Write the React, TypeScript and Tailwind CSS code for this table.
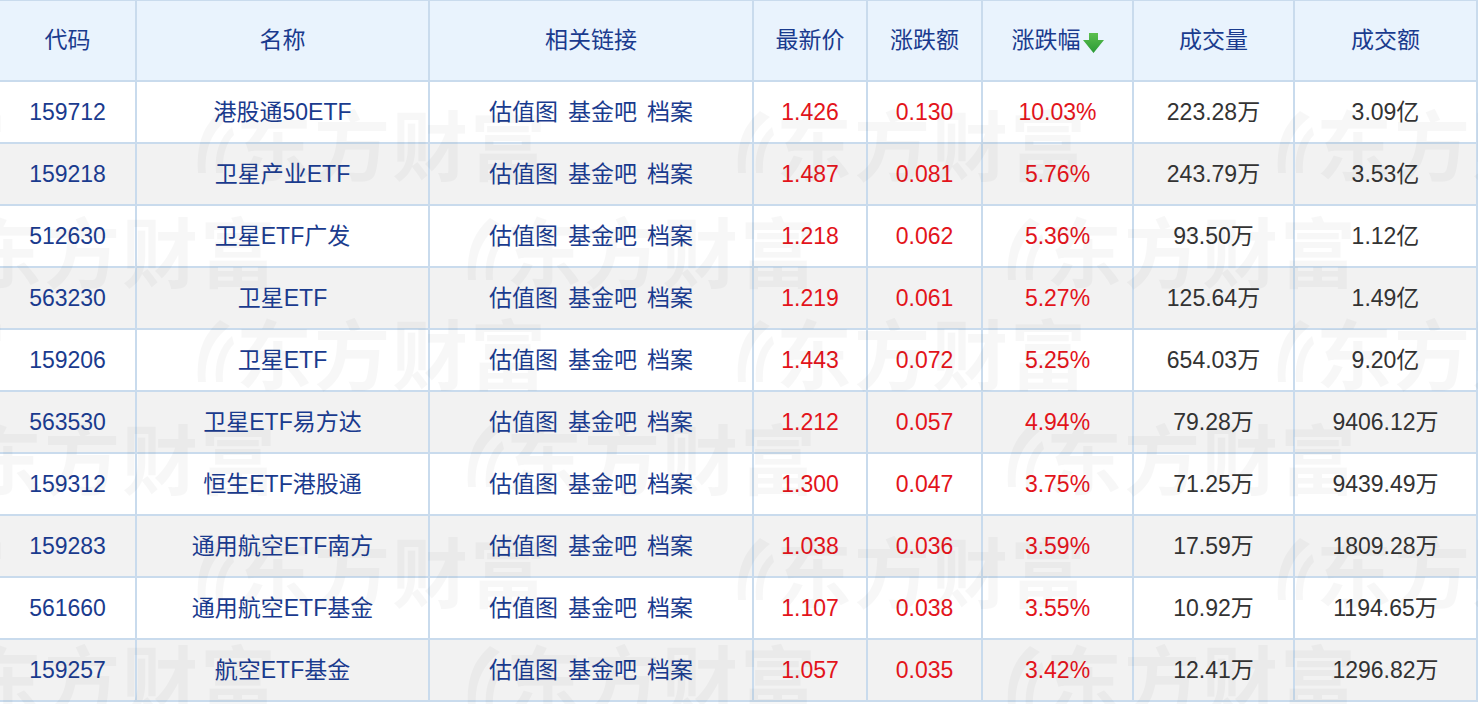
const rows = [
  { code: "159712", name: "港股通50ETF", price: "1.426", chg: "0.130", pct: "10.03%", vol: "223.28万", amt: "3.09亿" },
  { code: "159218", name: "卫星产业ETF", price: "1.487", chg: "0.081", pct: "5.76%", vol: "243.79万", amt: "3.53亿" },
  { code: "512630", name: "卫星ETF广发", price: "1.218", chg: "0.062", pct: "5.36%", vol: "93.50万", amt: "1.12亿" },
  { code: "563230", name: "卫星ETF", price: "1.219", chg: "0.061", pct: "5.27%", vol: "125.64万", amt: "1.49亿" },
  { code: "159206", name: "卫星ETF", price: "1.443", chg: "0.072", pct: "5.25%", vol: "654.03万", amt: "9.20亿" },
  { code: "563530", name: "卫星ETF易方达", price: "1.212", chg: "0.057", pct: "4.94%", vol: "79.28万", amt: "9406.12万" },
  { code: "159312", name: "恒生ETF港股通", price: "1.300", chg: "0.047", pct: "3.75%", vol: "71.25万", amt: "9439.49万" },
  { code: "159283", name: "通用航空ETF南方", price: "1.038", chg: "0.036", pct: "3.59%", vol: "17.59万", amt: "1809.28万" },
  { code: "561660", name: "通用航空ETF基金", price: "1.107", chg: "0.038", pct: "3.55%", vol: "10.92万", amt: "1194.65万" },
  { code: "159257", name: "航空ETF基金", price: "1.057", chg: "0.035", pct: "3.42%", vol: "12.41万", amt: "1296.82万" },
];

const headers = ["代码", "名称", "相关链接", "最新价", "涨跌额", "涨跌幅", "成交量", "成交额"];

// watermark tiles: [left, top]
const marks: [number, number][] = [];
const tops = [104, 211, 313, 418, 531, 639];
tops.forEach((t, i) => {
  const xs = i % 2 === 0 ? [-350, 190, 730, 1270] : [-80, 460, 1000, 1540];
  xs.forEach((x) => marks.push([x, t]));
});

function SortDown() {
  return (
    <svg width="21" height="22" viewBox="0 0 21 22" className="ml-[2px] mt-[4px]">
      <defs>
        <linearGradient id="g" x1="0" y1="0" x2="0" y2="1">
          <stop offset="0" stopColor="#5cbf4e" />
          <stop offset="1" stopColor="#2a9a36" />
        </linearGradient>
      </defs>
      <path d="M6 1h9v7h6l-10.5 13L0 8h6z" fill="url(#g)" />
    </svg>
  );
}

function Mark({ x, y }: { x: number; y: number }) {
  return (
    <div className="absolute flex items-center whitespace-nowrap" style={{ left: x, top: y }}>
      <svg width="44" height="70" viewBox="0 0 44 70" className="mr-[2px] shrink-0">
        <path d="M30 4 C14 18 6 36 8 66 L16 66 C14 42 22 24 40 10 Z" fill="currentColor" />
        <path d="M42 20 C30 30 24 46 26 66 L33 66 C32 50 36 36 44 28 Z" fill="currentColor" />
      </svg>
      <span className="text-[76px] font-bold leading-none tracking-[2px] font-['Noto_Sans_CJK_SC',sans-serif]">
        东方财富
      </span>
    </div>
  );
}

export default function App() {
  const cell = "flex items-center justify-center whitespace-nowrap";
  return (
    <div className="relative w-[1478px] h-[704px] overflow-hidden bg-white font-['Liberation_Sans','Noto_Sans_CJK_SC',sans-serif] text-[23px]">
      <div className="grid grid-cols-[135px_291px_322px_112px_113px_149px_159px_181px] grid-rows-[79px_repeat(10,60px)] gap-[2px] bg-[#c9dbed] pt-px pr-[2px] pb-[2px] w-[1478px]">
        {headers.map((h) => (
          <div key={h} className={`${cell} bg-[#e9f3fd] text-[#1a3b8e]`}>
            {h}
            {h === "涨跌幅" && <SortDown />}
          </div>
        ))}
        {rows.map((r, i) => {
          const bg = i % 2 === 0 ? "bg-white" : "bg-[#f2f2f2]";
          return [
            <div key={r.code + "c"} className={`${cell} ${bg} text-[#1a3b8e]`}>{r.code}</div>,
            <div key={r.code + "n"} className={`${cell} ${bg} text-[#1a3b8e]`}>{r.name}</div>,
            <div key={r.code + "l"} className={`${cell} ${bg} text-[#1a3b8e] gap-[10px]`}>
              <span>估值图</span>
              <span>基金吧</span>
              <span>档案</span>
            </div>,
            <div key={r.code + "p"} className={`${cell} ${bg} text-[#e3141b]`}>{r.price}</div>,
            <div key={r.code + "d"} className={`${cell} ${bg} text-[#e3141b]`}>{r.chg}</div>,
            <div key={r.code + "r"} className={`${cell} ${bg} text-[#e3141b]`}>{r.pct}</div>,
            <div key={r.code + "v"} className={`${cell} ${bg} text-[#333333]`}>{r.vol}</div>,
            <div key={r.code + "a"} className={`${cell} ${bg} text-[#333333]`}>{r.amt}</div>,
          ];
        })}
      </div>
      {/* faint watermark over the table */}
      <div className="pointer-events-none absolute left-0 top-[82px] right-0 bottom-0 overflow-hidden text-black/[0.03]">
        {marks.map(([x, y], i) => (
          <Mark key={i} x={x} y={y - 82} />
        ))}
      </div>
    </div>
  );
}
